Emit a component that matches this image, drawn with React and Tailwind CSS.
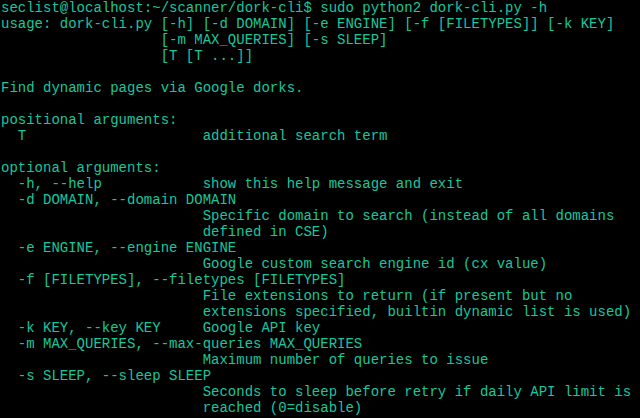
const lines = [
  "seclist@localhost:~/scanner/dork-cli$ sudo python2 dork-cli.py -h",
  "usage: dork-cli.py [-h] [-d DOMAIN] [-e ENGINE] [-f [FILETYPES]] [-k KEY]",
  "                   [-m MAX_QUERIES] [-s SLEEP]",
  "                   [T [T ...]]",
  "",
  "Find dynamic pages via Google dorks.",
  "",
  "positional arguments:",
  "  T                     additional search term",
  "",
  "optional arguments:",
  "  -h, --help            show this help message and exit",
  "  -d DOMAIN, --domain DOMAIN",
  "                        Specific domain to search (instead of all domains",
  "                        defined in CSE)",
  "  -e ENGINE, --engine ENGINE",
  "                        Google custom search engine id (cx value)",
  "  -f [FILETYPES], --filetypes [FILETYPES]",
  "                        File extensions to return (if present but no",
  "                        extensions specified, builtin dynamic list is used)",
  "  -k KEY, --key KEY     Google API key",
  "  -m MAX_QUERIES, --max-queries MAX_QUERIES",
  "                        Maximum number of queries to issue",
  "  -s SLEEP, --sleep SLEEP",
  "                        Seconds to sleep before retry if daily API limit is",
  "                        reached (0=disable)",
];

export default function App() {
  return (
    <div className="w-[640px] h-[418px] bg-black overflow-hidden">
      <pre className="m-0 pl-px text-[14px] leading-[16px] text-[#19c79e] font-['Liberation_Mono',monospace]">
        {lines.join("\n")}
      </pre>
    </div>
  );
}
